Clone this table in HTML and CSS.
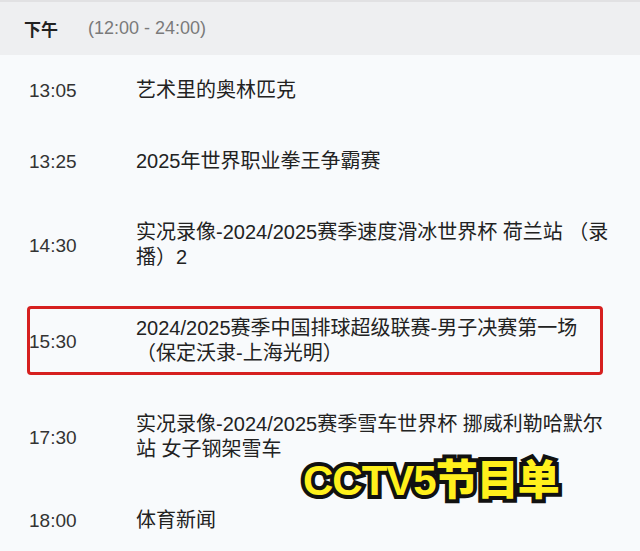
FILE: index.html
```html
<!DOCTYPE html>
<html lang="zh-CN">
<head>
  <meta charset="UTF-8" />
  <title>CCTV5节目单</title>
  <link rel="stylesheet" href="styles.css">
</head>
<body>
  <div class="page">
    <div class="period">
      <span class="period-name">下午</span>
      <span class="period-range">(12:00 - 24:00)</span>
    </div>

    <ul class="schedule">
      <li class="show">
        <span class="time">13:05</span>
        <span class="title">艺术里的奥林匹克</span>
      </li>
      <li class="show">
        <span class="time">13:25</span>
        <span class="title">2025年世界职业拳王争霸赛</span>
      </li>
      <li class="show">
        <span class="time">14:30</span>
        <span class="title">实况录像-2024/2025赛季速度滑冰世界杯 荷兰站 （录播）2</span>
      </li>
      <li class="show marked">
        <span class="time">15:30</span>
        <span class="title">2024/2025赛季中国排球超级联赛-男子决赛第一场（保定沃隶-上海光明）</span>
      </li>
      <li class="show">
        <span class="time">17:30</span>
        <span class="title">实况录像-2024/2025赛季雪车世界杯 挪威利勒哈默尔站 女子钢架雪车</span>
      </li>
      <li class="show">
        <span class="time">18:00</span>
        <span class="title">体育新闻</span>
      </li>
    </ul>

    <div class="stamp">CCTV5节目单</div>
  </div>
</body>
</html>
```

FILE: styles.css
```css
* {
  box-sizing: border-box;
}
body {
  margin: 0;
  background: #f8fafc;
  font-family: "Liberation Sans", "Noto Sans CJK SC", sans-serif;
  color: #222;
}
.page {
  position: relative;
  width: 640px;
  height: 551px;
  overflow: hidden;
}
.period {
  height: 55px;
  display: flex;
  align-items: center;
  gap: 30px;
  padding: 0 0 0 24px;
  background: #eeeff1;
  border-top: 2px solid #e1e1e3;
}
.period-name {
  font-size: 17px;
  font-weight: bold;
  color: #222;
}
.period-range {
  font-size: 18px;
  color: #7a7a7a;
}
.schedule {
  list-style: none;
  margin: 0;
  padding: 0;
}
.show {
  position: relative;
  display: flex;
  align-items: center;
  padding: 23px 0 23px 29px;
  line-height: 25px;
}
.time {
  width: 107px;
  flex-shrink: 0;
  font-size: 19px;
  color: #333;
}
.title {
  width: 478px;
  font-size: 20px;
  color: #222;
}
.marked::after {
  content: "";
  position: absolute;
  left: 27px;
  right: 37px;
  top: 13px;
  bottom: 14px;
  border: 3px solid #d6201f;
  border-radius: 4px;
}
.stamp {
  position: absolute;
  left: 303px;
  top: 446px;
  font-size: 42px;
  font-weight: 900;
  letter-spacing: -1px;
  color: #fff01c;
  -webkit-text-stroke: 8px #111;
  paint-order: stroke fill;
}
```
